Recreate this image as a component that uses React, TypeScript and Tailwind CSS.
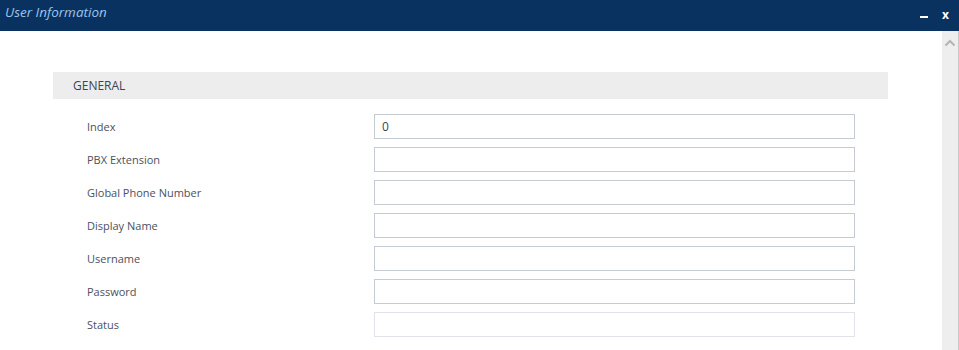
import React from 'react';

const fields = [
  { label: 'Index', value: '0' },
  { label: 'PBX Extension', value: '' },
  { label: 'Global Phone Number', value: '' },
  { label: 'Display Name', value: '' },
  { label: 'Username', value: '' },
  { label: 'Password', value: '' },
  { label: 'Status', value: '', disabled: true },
];

export default function App() {
  return (
    <div className="w-[959px] h-[350px] overflow-hidden bg-white flex flex-col font-['Open_Sans',sans-serif]">
      {/* Title bar */}
      <div className="h-[31px] bg-[#0a3260] flex items-center justify-between pl-[5px] pr-[10px] shrink-0">
        <span className="italic text-[13.5px] text-[#9dc3ec] -mt-[7px]">User Information</span>
        <div className="flex items-center gap-[14px] text-white">
          <span className="block w-[8px] h-[2px] bg-white mt-[2px]" />
          <span className="text-[12px] font-bold leading-none -mt-[1px]">x</span>
        </div>
      </div>

      <div className="flex flex-1 min-h-0">
        {/* Content */}
        <div className="flex-1 pt-[41px] pl-[53px]">
          <div className="w-[835px] h-[27px] bg-[#ededed] flex items-center pl-[20px] text-[12px] text-[#3d4450]">
            GENERAL
          </div>
          <div className="flex flex-col gap-[8px] pt-[15px] pl-[34px]">
            {fields.map((f) => (
              <div key={f.label} className="flex items-center h-[25px]">
                <span className="w-[287px] pt-[2px] text-[11px] text-[#4a5160]">{f.label}</span>
                <input
                  readOnly
                  value={f.value}
                  className={`w-[481px] h-[25px] px-[7px] text-[12px] text-[#3a4250] outline-none border ${
                    f.disabled ? 'border-[#e2e2ea]' : 'border-[#c6cad1]'
                  }`}
                />
              </div>
            ))}
          </div>
        </div>

        {/* Scrollbar */}
        <div className="w-[17px] bg-[#eeeeee] flex border-r border-[#c8c8c8]">
          <svg width="16" height="16" viewBox="0 0 16 16" className="mt-[4px]">
            <path d="M3.5 10.5 L8 6 L12.5 10.5" fill="none" stroke="#b4b4b4" strokeWidth="2" />
          </svg>
        </div>
      </div>
    </div>
  );
}
